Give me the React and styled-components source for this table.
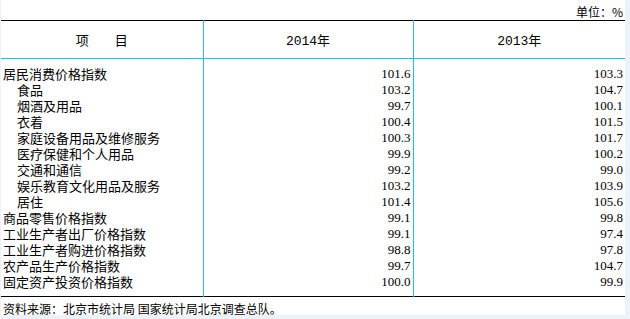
import React from 'react';
import styled, { createGlobalStyle } from 'styled-components';

const GlobalStyle = createGlobalStyle`
  html, body {
    margin: 0;
    padding: 0;
    background: #edf2fa;
  }
`;

const Page = styled.div`
  width: 624px;
  height: 315px;
  margin-left: 1px;
  background: #ffffff;
  font-family: "Noto Sans CJK SC", "Liberation Sans", sans-serif;
  font-size: 13px;
  color: #000;
`;

const Unit = styled.div`
  height: 20px;
  line-height: 24px;
  text-align: right;
  padding-right: 2px;
  font-size: 12px;
`;

const Table = styled.table`
  width: 624px;
  border-collapse: collapse;
  table-layout: fixed;
  border-top: 1px solid #000;
  border-bottom: 1px solid #000;
`;

const HeadCell = styled.th`
  height: 37px;
  padding: 0;
  font-weight: normal;
  font-size: 13px;
  text-align: center;
  border-bottom: 1px solid #1fbdf0;
  border-left: ${p => (p.$first ? 'none' : '1px solid #1fbdf0')};
  font-family: ${p => (p.$year ? '"Liberation Mono", "Noto Sans CJK SC", monospace' : 'inherit')};
`;

const Row = styled.tr`
  &:first-child td {
    padding-top: 7px;
  }
  &:last-child td {
    padding-bottom: 6px;
  }
`;

const NameCell = styled.td`
  height: 16px;
  line-height: 16px;
  padding: 0 0 0 ${p => (p.$indent ? '16px' : '2px')};
  white-space: nowrap;
`;

const ValueCell = styled.td`
  height: 16px;
  line-height: 16px;
  padding: 0 2px 0 0;
  text-align: right;
  border-left: 1px solid #1fbdf0;
  font-family: "Liberation Serif", serif;
  font-size: 13px;
`;

const Source = styled.div`
  height: 20px;
  line-height: 24px;
  padding-left: 2px;
  font-size: 12px;
`;

const rows = [
  ['居民消费价格指数', false, '101.6', '103.3'],
  ['食品', true, '103.2', '104.7'],
  ['烟酒及用品', true, '99.7', '100.1'],
  ['衣着', true, '100.4', '101.5'],
  ['家庭设备用品及维修服务', true, '100.3', '101.7'],
  ['医疗保健和个人用品', true, '99.9', '100.2'],
  ['交通和通信', true, '99.2', '99.0'],
  ['娱乐教育文化用品及服务', true, '103.2', '103.9'],
  ['居住', true, '101.4', '105.6'],
  ['商品零售价格指数', false, '99.1', '99.8'],
  ['工业生产者出厂价格指数', false, '99.1', '97.4'],
  ['工业生产者购进价格指数', false, '98.8', '97.8'],
  ['农产品生产价格指数', false, '99.7', '104.7'],
  ['固定资产投资价格指数', false, '100.0', '99.9'],
];

export default function App() {
  return (
    <>
      <GlobalStyle />
      <Page>
        <Unit>单位：%</Unit>
        <Table>
          <colgroup>
            <col style={{ width: 202 }} />
            <col style={{ width: 210 }} />
            <col style={{ width: 212 }} />
          </colgroup>
          <thead>
            <tr>
              <HeadCell $first>项　　目</HeadCell>
              <HeadCell $year>2014年</HeadCell>
              <HeadCell $year>2013年</HeadCell>
            </tr>
          </thead>
          <tbody>
            {rows.map(([name, indent, a, b]) => (
              <Row key={name}>
                <NameCell $indent={indent}>{name}</NameCell>
                <ValueCell>{a}</ValueCell>
                <ValueCell>{b}</ValueCell>
              </Row>
            ))}
          </tbody>
        </Table>
        <Source>资料来源：北京市统计局 国家统计局北京调查总队。</Source>
      </Page>
    </>
  );
}
